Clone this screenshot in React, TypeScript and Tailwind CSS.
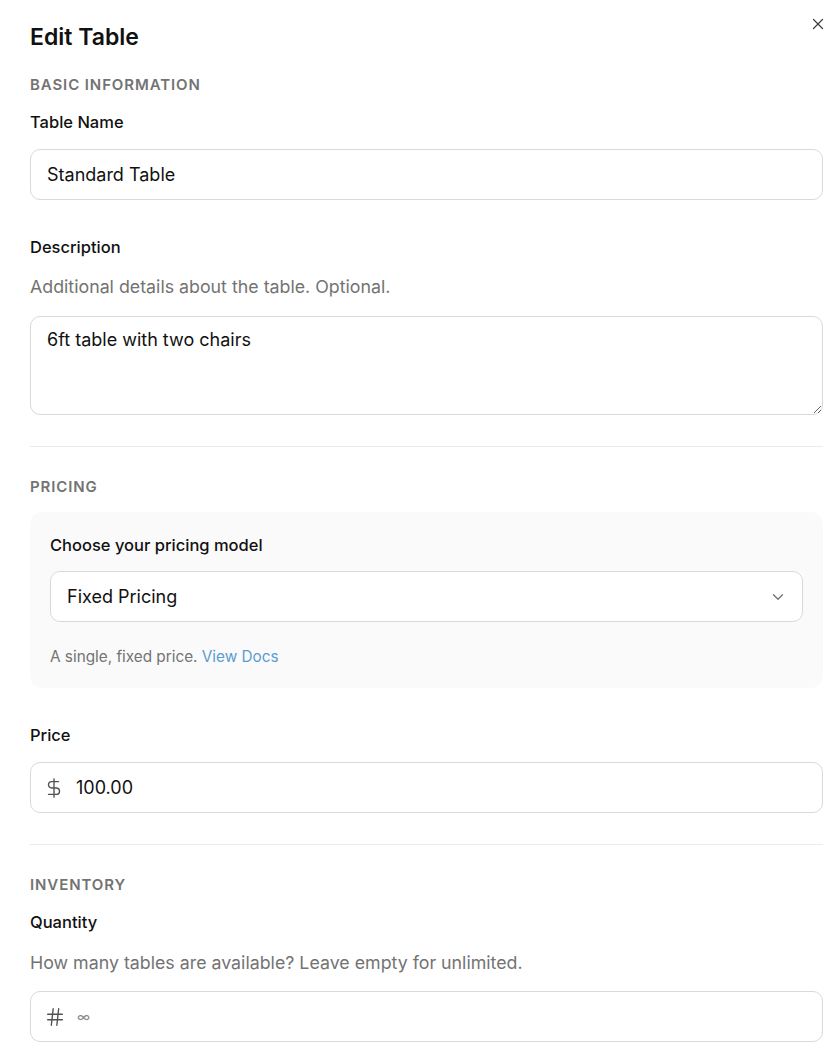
import React from "react";
import { X, ChevronDown, DollarSign, Hash } from "lucide-react";

const font = { fontFamily: "Inter, 'Noto Sans', sans-serif" };

function SectionTitle({ children, className = "" }: { children: React.ReactNode; className?: string }) {
  return (
    <div className={"text-[15px] leading-[20px] font-semibold tracking-[0.06em] uppercase text-[#737373] " + className}>
      {children}
    </div>
  );
}

function Label({ children, className = "" }: { children: React.ReactNode; className?: string }) {
  return <div className={"text-[16.5px] leading-[24px] font-medium text-[#111111] " + className}>{children}</div>;
}

function Help({ children, className = "" }: { children: React.ReactNode; className?: string }) {
  return <div className={"text-[17.8px] leading-[26px] text-[#737373] " + className}>{children}</div>;
}

export default function App() {
  return (
    <div style={font} className="relative min-h-[1063px] bg-white pl-[30px] pr-[17px] pt-[23px] text-[#111111]">
      <button className="absolute right-[13px] top-[15px] text-[#404040]" aria-label="Close">
        <X size={18} strokeWidth={1.75} />
      </button>

      <h1 className="text-[23px] leading-[28px] font-semibold">Edit Table</h1>

      <SectionTitle className="mt-[24px]">Basic Information</SectionTitle>
      <Label className="mt-[15px]">Table Name</Label>
      <div className="mt-[15px] flex h-[51px] items-center rounded-[10px] border border-[#d9d9d9] bg-white px-[16px] text-[18px]">
        Standard Table
      </div>

      <Label className="mt-[35px]">Description</Label>
      <Help className="mt-[15px]">Additional details about the table. Optional.</Help>
      <textarea
        className="mt-[16px] block h-[99px] w-full resize-y rounded-[10px] border border-[#d9d9d9] bg-white px-[16px] pt-[11px] text-[18px] leading-[24px] text-[#111111] outline-none"
        defaultValue="6ft table with two chairs"
      />

      <div className="mt-[31px] h-px bg-[#ebebeb]" />

      <SectionTitle className="mt-[30px]">Pricing</SectionTitle>
      <div className="mt-[15px] rounded-[12px] bg-[#fafafa] px-[20px] pb-[20px] pt-[20px]">
        <div className="text-[16.5px] leading-[26px] font-medium">Choose your pricing model</div>
        <div className="mt-[13px] flex h-[51px] items-center justify-between rounded-[10px] border border-[#d9d9d9] bg-white pl-[16px] pr-[15px] text-[18px]">
          <span>Fixed Pricing</span>
          <ChevronDown size={18} strokeWidth={1.75} className="text-[#737373]" />
        </div>
        <div className="mt-[24px] text-[15.3px] leading-[22px] text-[#737373]">
          A single, fixed price. <span className="text-[#5b9bd5]">View Docs</span>
        </div>
      </div>

      <Label className="mt-[35px]">Price</Label>
      <div className="mt-[15px] flex h-[51px] items-center rounded-[10px] border border-[#d9d9d9] bg-white px-[12px] text-[18px]">
        <DollarSign size={22} strokeWidth={1.5} className="text-[#525252]" />
        <span className="ml-[11px]">100.00</span>
      </div>

      <div className="mt-[31px] h-px bg-[#ebebeb]" />

      <SectionTitle className="mt-[30px]">Inventory</SectionTitle>
      <Label className="mt-[15px]">Quantity</Label>
      <Help className="mt-[16px]">How many tables are available? Leave empty for unlimited.</Help>
      <div className="mt-[15px] flex h-[51px] items-center rounded-[10px] border border-[#d9d9d9] bg-white px-[13px] text-[18px]">
        <Hash size={22} strokeWidth={1.5} className="text-[#525252]" />
        <span className="ml-[11px] text-[14px] text-[#8a8a8a]">∞</span>
      </div>
    </div>
  );
}
